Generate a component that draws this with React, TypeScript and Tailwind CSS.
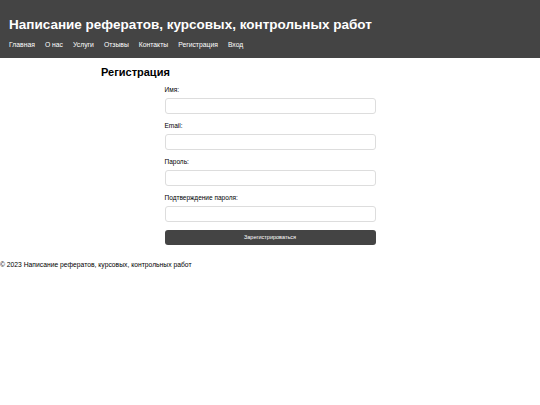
export default function App() {
  const fields = ["Имя:", "Email:", "Пароль:", "Подтверждение пароля:"];
  const nav = ["Главная", "О нас", "Услуги", "Отзывы", "Контакты", "Регистрация", "Вход"];
  return (
    <div className="min-h-[405px] bg-white font-['Liberation_Sans',Arial,sans-serif] text-black">
      <header className="h-[58px] bg-[#444444] px-[9px] pt-[15px] text-white">
        <h1 className="text-[13.5px] font-bold leading-[20px]">Написание рефератов, курсовых, контрольных работ</h1>
        <nav className="mt-[5px] flex gap-[10px] text-[6.8px] leading-[10px] text-white">
          {nav.map((n) => (
            <a key={n}>{n}</a>
          ))}
        </nav>
      </header>
      <main className="mx-auto w-[338px] pt-[7px]">
        <h2 className="text-[11px] font-bold leading-[14px]">Регистрация</h2>
        <form className="mx-auto mt-[6px] flex w-[211px] flex-col">
          {fields.map((f) => (
            <div key={f} className="mb-[7px] flex flex-col">
              <label className="mb-[3px] h-[10px] text-[6.5px] leading-[10px]">{f}</label>
              <input className="h-[16px] rounded-[3px] border border-[#dddddd] bg-white" />
            </div>
          ))}
          <button type="button" className="mt-[1px] h-[15px] rounded-[3px] bg-[#444444] text-[5.5px] text-white">
            Зарегистрироваться
          </button>
        </form>
      </main>
      <footer className="mt-[15px] text-[6.75px] leading-[10px]">© 2023 Написание рефератов, курсовых, контрольных работ</footer>
    </div>
  );
}
